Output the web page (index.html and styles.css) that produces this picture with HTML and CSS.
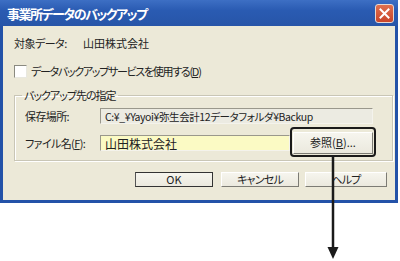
FILE: index.html
```html
<!DOCTYPE html>
<html lang="ja">
<head>
    <meta charset="UTF-8">
    <title>事業所データのバックアップ</title>
    <link rel="stylesheet" href="styles.css">
</head>
<body>
    <div class="window">
        <div class="titlebar">
            <span class="title">事業所データのバックアップ</span>
            <span class="close-btn">
                <svg width="11" height="11" viewBox="0 0 11 11"><path d="M1.5 1.5 L9.5 9.5 M9.5 1.5 L1.5 9.5" stroke="#fff" stroke-width="2" stroke-linecap="square"/></svg>
            </span>
        </div>
        <div class="content">
            <div class="row target">
                <span class="target-label">対象データ:</span>
                <span>山田株式会社</span>
            </div>
            <label class="row check-row">
                <span class="checkbox"></span>
                <span class="check-text">データバックアップサービスを使用する(<u>D</u>)</span>
            </label>
            <fieldset class="group">
                <legend>バックアップ先の指定</legend>
                <div class="field-row">
                    <span class="field-label">保存場所:</span>
                    <span class="field readonly">C:¥_¥Yayoi¥弥生会計12データフォルダ¥Backup</span>
                </div>
                <div class="field-row file-row">
                    <span class="field-label">ファイル名(<u>F</u>):</span>
                    <span class="field editable">山田株式会社</span>
                    <span class="btn browse">参照(<u>B</u>)...</span>
                </div>
            </fieldset>
            <div class="buttons">
                <span class="btn default">OK</span>
                <span class="btn kana">キャンセル</span>
                <span class="btn kana help">ヘルプ</span>
            </div>
        </div>
    </div>
    <div class="callout"></div>
    <svg class="arrow" width="14" height="104" viewBox="0 0 14 104">
        <line x1="7" y1="0" x2="7" y2="93" stroke="#1a1a1a" stroke-width="2.5"/>
        <polygon points="1.5,90 12.5,90 7,102" fill="#1a1a1a"/>
    </svg>
</body>
</html>
```

FILE: styles.css
```css
body {
    margin: 0;
    background: #fff;
    font-family: "Noto Sans CJK JP", "Liberation Sans", sans-serif;
    font-size: 11px;
    color: #222;
    font-feature-settings: "palt";
    position: relative;
    width: 400px;
    height: 261px;
    overflow: hidden;
}
u {
    text-decoration: underline;
    text-underline-offset: 1px;
}
.window {
    width: 398px;
    box-sizing: border-box;
    border: 3px solid #2352a8;
    border-top: none;
    background: #ece9d8;
}
.titlebar {
    height: 26px;
    margin: 0 -3px;
    background: linear-gradient(#3d6fc4, #2a5bb2 40%, #2755a8);
    display: flex;
    align-items: center;
    justify-content: space-between;
    padding: 0 4px 0 7px;
}
.title {
    color: #fff;
    font-size: 13px;
    font-weight: bold;
    letter-spacing: -1.5px;
}
.close-btn {
    width: 19px;
    height: 19px;
    box-sizing: border-box;
    border: 1px solid #e8d8d0;
    border-radius: 3px;
    background: linear-gradient(#e0704f, #c9452a);
    display: flex;
    align-items: center;
    justify-content: center;
}
.content {
    padding: 10px 0 13px;
}
.row {
    display: flex;
    align-items: center;
    height: 14px;
    line-height: 14px;
    padding-left: 11px;
}
.target-label {
    width: 69px;
    letter-spacing: -0.5px;
}
.check-row {
    margin-top: 14px;
    gap: 4px;
}
.check-text {
    letter-spacing: -1.3px;
}
.checkbox {
    width: 11px;
    height: 11px;
    background: #fff;
    border: 1px solid;
    border-color: #8a8a80 #e8e8e0 #e8e8e0 #8a8a80;
}
.group {
    margin: 10px 2px 0 11px;
    padding: 6px 10px 6px 10px;
    border: 1px solid #c9c6b6;
    box-shadow: inset 1px 1px 0 #fff, 1px 1px 0 #fff;
}
.group legend {
    padding: 0 2px;
    margin-left: -3px;
    line-height: 14px;
    letter-spacing: -1px;
}
.field-row {
    display: flex;
    align-items: center;
    height: 16px;
}
.file-row {
    height: 23px;
    margin-top: 7px;
}
.field-label {
    width: 75px;
    letter-spacing: -0.6px;
}
.field {
    height: 16px;
    line-height: 16px;
    box-sizing: border-box;
    padding-left: 4px;
    border: 1px solid;
    border-color: #9a988c #f4f3ec #f4f3ec #9a988c;
    white-space: nowrap;
}
.readonly {
    width: 273px;
    background: #ecebe2;
    font-size: 10.5px;
    letter-spacing: -0.4px;
}
.editable {
    width: 190px;
    background: #fbfac4;
    font-size: 12px;
}
.btn {
    display: flex;
    align-items: center;
    justify-content: center;
    width: 78px;
    height: 15px;
    box-sizing: border-box;
    background: linear-gradient(#f6f5ee, #ebe9de);
    border: 1px solid;
    border-color: #fff #7c7b74 #7c7b74 #fff;
    line-height: 13px;
}
.kana {
    letter-spacing: -0.8px;
}
.browse {
    width: 80px;
    height: 22px;
    margin-left: 3px;
}
.buttons {
    display: flex;
    justify-content: flex-end;
    gap: 8px;
    margin: 11px 8px 0 0;
}
.buttons .help {
    margin-left: -2px;
    width: 82px;
}
.default {
    border-color: #333 #333 #333 #555;
}
.callout {
    position: absolute;
    left: 290px;
    top: 127px;
    width: 86px;
    height: 30px;
    box-sizing: border-box;
    border: 2.5px solid #1a1a1a;
    border-radius: 4px;
}
.arrow {
    position: absolute;
    left: 326px;
    top: 157px;
}
```
